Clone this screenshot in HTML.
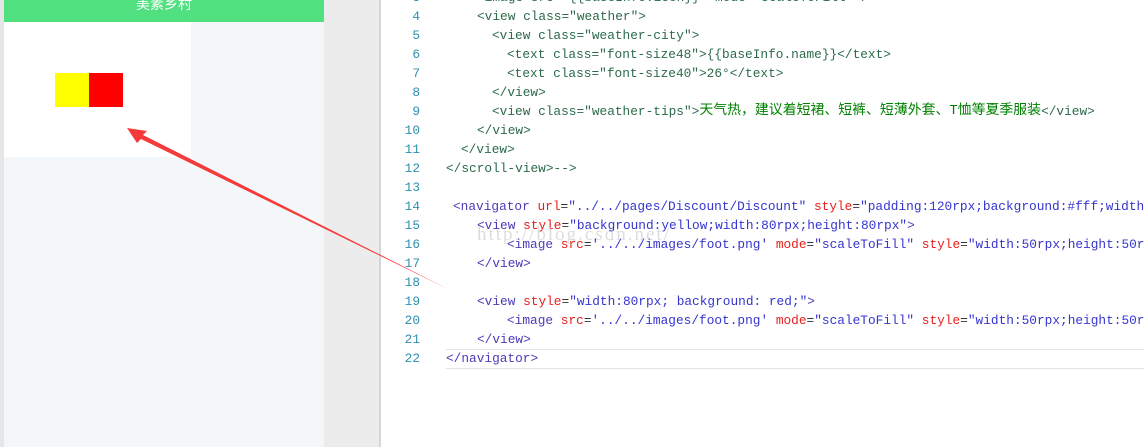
<!DOCTYPE html>
<html><head><meta charset="utf-8"><style>
body{margin:0;width:1144px;height:447px;position:relative;overflow:hidden;background:#fff;font-family:"Liberation Sans","Noto Sans CJK SC",sans-serif}
.a{position:absolute}
.ln{position:absolute;width:40px;left:380px;text-align:right;color:#2f8fb0;font-family:"Liberation Mono",monospace;font-size:12.8px;line-height:19px;height:19px}
.l{position:absolute;white-space:pre;font-family:"Liberation Mono","Noto Sans CJK SC",monospace;font-size:12.8px;line-height:19px;height:19px}
.c{color:#2c6a4a}.g{color:#008000;font-size:13.9px;line-height:19px;vertical-align:top}
.t{color:#4a3bb8}.r{color:#e8201c}.s{color:#3535d0}.k{color:#333}
</style></head><body>
<div class="a" style="left:0;top:0;width:4px;height:447px;background:#e6e6e6"></div>
<div class="a" style="left:4px;top:0;width:320px;height:447px;background:#f4f7fa"></div>
<div class="a" style="left:4px;top:0;width:320px;height:22px;background:#50e080;color:#fff;text-align:center;font-size:14px;line-height:8px">美素乡村</div>
<div class="a" style="left:4px;top:22px;width:187px;height:135px;background:#fff"></div>
<div class="a" style="left:55px;top:73px;width:34px;height:34px;background:#ff0"></div>
<div class="a" style="left:89px;top:73px;width:34px;height:34px;background:#f00"></div>
<div class="a" style="left:324px;top:0;width:55px;height:447px;background:#ececec"></div>
<div class="a" style="left:379px;top:0;width:2px;height:447px;background:#d6d6d6"></div>
<div class="a" style="left:446px;top:349px;width:698px;height:18px;border-top:1px solid #e4e4e4;border-bottom:1px solid #e4e4e4"></div>

<div class="ln" style="top:-12px">3</div>
<div class="ln" style="top:7px">4</div><div class="ln" style="top:26px">5</div><div class="ln" style="top:45px">6</div><div class="ln" style="top:64px">7</div><div class="ln" style="top:83px">8</div><div class="ln" style="top:102px">9</div><div class="ln" style="top:121px">10</div><div class="ln" style="top:140px">11</div><div class="ln" style="top:159px">12</div><div class="ln" style="top:178px">13</div><div class="ln" style="top:197px">14</div><div class="ln" style="top:216px">15</div><div class="ln" style="top:235px">16</div><div class="ln" style="top:254px">17</div><div class="ln" style="top:273px">18</div><div class="ln" style="top:292px">19</div><div class="ln" style="top:311px">20</div><div class="ln" style="top:330px">21</div><div class="ln" style="top:349px">22</div>

<div class="l c" style="left:477px;top:-12px">&lt;image src="{{baseInfo.icon}}" mode="scaleToFill" /&gt;</div>
<div class="l c" style="left:477px;top:7px">&lt;view class="weather"&gt;</div>
<div class="l c" style="left:492px;top:26px">&lt;view class="weather-city"&gt;</div>
<div class="l c" style="left:507px;top:45px">&lt;text class="font-size48"&gt;{{baseInfo.name}}&lt;/text&gt;</div>
<div class="l c" style="left:507px;top:64px">&lt;text class="font-size40"&gt;26°&lt;/text&gt;</div>
<div class="l c" style="left:492px;top:83px">&lt;/view&gt;</div>
<div class="l c" style="left:492px;top:102px">&lt;view class="weather-tips"&gt;<span class="g">天气热，建议着短裙、短裤、短薄外套、T恤等夏季服装</span>&lt;/view&gt;</div>
<div class="l c" style="left:477px;top:121px">&lt;/view&gt;</div>
<div class="l c" style="left:461px;top:140px">&lt;/view&gt;</div>
<div class="l c" style="left:446px;top:159px">&lt;/scroll-view&gt;--&gt;</div>
<div class="l" style="left:453px;top:197px"><span class="t">&lt;navigator</span> <span class="r">url</span><span class="k">=</span><span class="s">"../../pages/Discount/Discount"</span> <span class="r">style</span><span class="k">=</span><span class="s">"padding:120rpx;background:#fff;width:80rpx"</span></div>
<div class="l" style="left:477px;top:216px"><span class="t">&lt;view</span> <span class="r">style</span><span class="k">=</span><span class="s">"background:yellow;width:80rpx;height:80rpx"</span><span class="t">&gt;</span></div>
<div class="l" style="left:507px;top:235px"><span class="t">&lt;image</span> <span class="r">src</span><span class="k">=</span><span class="s">'../../images/foot.png'</span> <span class="r">mode</span><span class="k">=</span><span class="s">"scaleToFill"</span> <span class="r">style</span><span class="k">=</span><span class="s">"width:50rpx;height:50rpx"</span></div>
<div class="l" style="left:477px;top:254px"><span class="t">&lt;/view&gt;</span></div>
<div class="l" style="left:477px;top:292px"><span class="t">&lt;view</span> <span class="r">style</span><span class="k">=</span><span class="s">"width:80rpx; background: red;"</span><span class="t">&gt;</span></div>
<div class="l" style="left:507px;top:311px"><span class="t">&lt;image</span> <span class="r">src</span><span class="k">=</span><span class="s">'../../images/foot.png'</span> <span class="r">mode</span><span class="k">=</span><span class="s">"scaleToFill"</span> <span class="r">style</span><span class="k">=</span><span class="s">"width:50rpx;height:50rpx"</span></div>
<div class="l" style="left:477px;top:330px"><span class="t">&lt;/view&gt;</span></div>
<div class="l" style="left:446px;top:349px"><span class="t">&lt;/navigator&gt;</span></div>
<div class="a" style="left:477px;top:224px;font-family:'Liberation Serif',serif;font-size:19px;color:rgba(180,180,180,0.45);letter-spacing:2px">http://blog.csdn.net/</div>

<svg class="a" style="left:0;top:0" width="1144" height="447">
<polygon points="127,128 147,131 143,135 448,289 141,139 137,143" fill="#f43a3a"/>
</svg>
</body></html>
